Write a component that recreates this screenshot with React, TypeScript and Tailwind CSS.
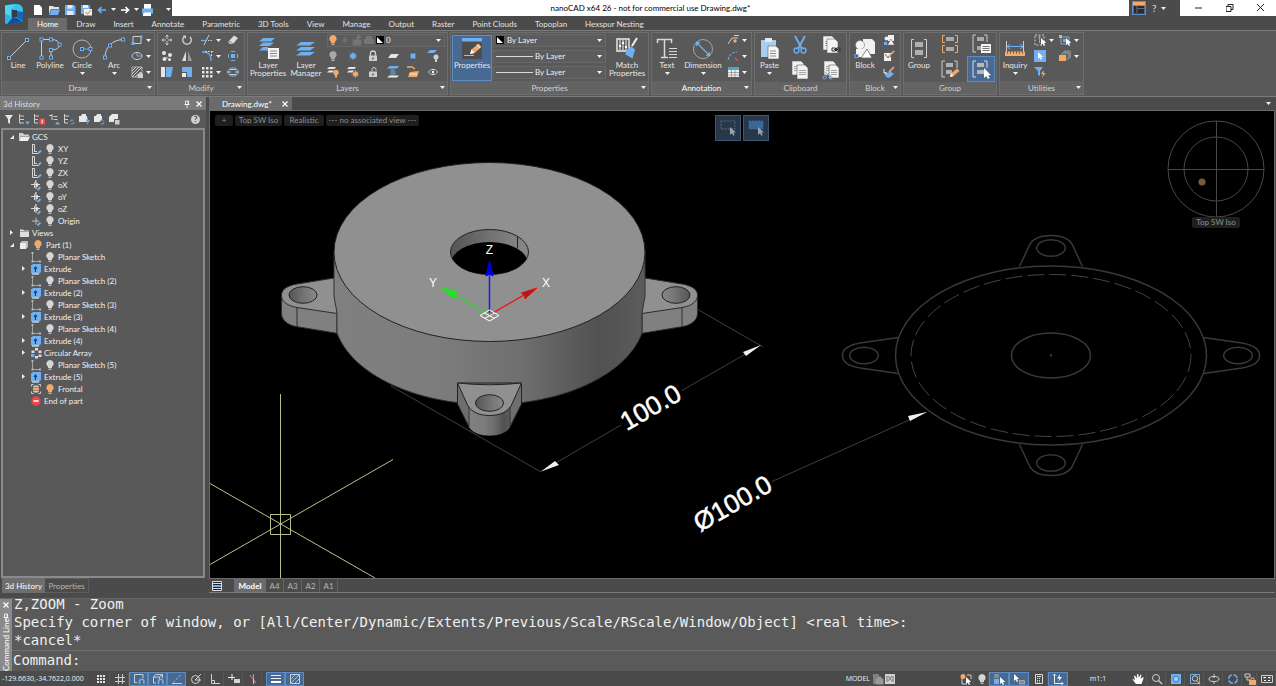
import { useState, type ReactNode } from "react";
import clsx from "clsx";

const L = "#cfcfcf";
const B = "#6fb0f2";
const O = "#f2a96a";

function Nodes({ at }: { at: number[][] }) {
  return (
    <>
      {at.map(([x, y]) => (
        <rect key={`${x}-${y}`} x={x - 1.5} y={y - 1.5} width="3" height="3" fill="#3f4a55" stroke={B} />
      ))}
    </>
  );
}

function Page({ x, y, w = 9, h = 11 }: { x: number; y: number; w?: number; h?: number }) {
  return (
    <>
      <path d={`M${x} ${y}h${w - 3}l3 3v${h - 3}h-${w}z`} fill="#f2f2f2" stroke="#5c5c5c" strokeWidth=".6" />
      <path d={`M${x + 2} ${y + 5.5}h${w - 4}m-${w - 4} 2h${w - 4}m-${w - 4} 2h${w - 4}`} stroke="#a5a5a5" />
    </>
  );
}

const bulb = (fill: string) => (
  <>
    <path d="M6 1a3.700 3.700 0 0 1 2 6.800V9H4V7.800A3.700 3.700 0 0 1 6 1z" fill={fill} />
    <path d="M4.500 9.500h3v1.500h-3z" fill="#b8b8b8" />
  </>
);

const cursor = (x: number, y: number) => (
  <path d={`M${x} ${y}v7l1.700-1.600 1.200 2.500 1.200-.6-1.200-2.300h2.300z`} fill="#fff" />
);

// 24x24 drawings
const big: Record<string, ReactNode> = {
  line: (
    <>
      <path d="M3 21 21 3" stroke={L} />
      <Nodes at={[[3, 21], [21, 3]]} />
    </>
  ),
  polyline: (
    <>
      <path d="M3.500 21V2.500H13c5 0 8.500 2 8.500 5.500S17 13 13 13v8" stroke={L} />
      <Nodes at={[[3.5, 2.5], [13, 2.5], [21.5, 7.5], [13, 13], [3.5, 20.5], [13, 20.5]]} />
    </>
  ),
  circle: (
    <>
      <circle cx="12" cy="12" r="9" stroke="#b5b5b5" />
      <path d="M12 12h8" stroke={B} />
      <Nodes at={[[12, 12], [20.5, 12]]} />
    </>
  ),
  arc: (
    <>
      <path d="M3 21C3 10 10 3 21 2.500" stroke={L} />
      <Nodes at={[[3, 20.5], [8, 8.5], [21, 2.5]]} />
    </>
  ),
  layerProps: (
    <>
      <path d="M7 1h12l-4 3.500H3zM7 5.500h11l-4 3.500H3zM7 10h5v3.500H3z" fill={B} />
      <path d="M12 11h11v11H12z" fill="#f2f2f2" />
      <path d="M14 14h7M14 16.500h7M14 19h7" stroke="#8a8a8a" />
    </>
  ),
  layerManager: (
    <path d="M7 5h14l-5 3.500H2zM7 10h14l-5 3.500H2zM7 15h14l-5 3.500H2z" fill={B} />
  ),
  properties: (
    <>
      <path d="M2 2h20v20H2z" fill="#4d4d4d" />
      <path d="M2 1h20v3.500H2z" fill={B} />
      <path d="M4 18.500h10" stroke={O} />
      <path d="m10 17 1.500-4.500 7-6 3 3.500-7 6z" fill={O} />
      <path d="m10 17 1.500-4.500 3 3.500z" fill="#fff" />
      <path d="m17 7.500 3 3.500" stroke="#fff" />
    </>
  ),
  match: (
    <>
      <path d="M2 2h12v12H2z" stroke="#eee" strokeWidth="1.400" />
      <path d="M5 3v10M8 3v10M11 3v10" stroke="#eee" />
      <path d="M4 9h2M7 6h2M10 10h2" stroke="#fff" strokeWidth="2" />
      <path d="m22 1-5 8" stroke="#eee" strokeWidth="2" />
      <path d="m11 14 5-5 4 3.500-2.500 9-7-4z" fill={B} />
    </>
  ),
  text: (
    <>
      <path d="M2.500 6V2.500h14V6M9.500 2.500V20M6 20.500h7" stroke="#d8d8d8" strokeWidth="1.500" />
      <path d="M14 11.500h8M14 14.500h8M14 17.500h8M14 20.500h8" stroke="#d8d8d8" />
    </>
  ),
  dimension: (
    <>
      <circle cx="12" cy="12" r="9.500" stroke="#a5a5a5" />
      <path d="m6.500 6.500 11 11" stroke={B} strokeWidth="1.300" />
      <path d="M5 5h4.500L5 9.500zM19 19h-4.500l4.500-4.500z" fill={B} />
    </>
  ),
  paste: (
    <>
      <path d="M3 3h15v17H3z" fill="#a9cdf0" />
      <path d="M7 1h7v4H7z" fill="#e8e8e8" />
      <path d="M10 9h8l3 3v10H10z" fill="#f4f4f4" stroke="#5c5c5c" strokeWidth=".6" />
      <path d="M12 14h6M12 16.500h6M12 19h6" stroke="#8a8a8a" />
    </>
  ),
  block: (
    <>
      <path d="M10 2h9l3 3v12H10z" fill="#f0f0f0" />
      <circle cx="7" cy="8" r="4.500" fill="#f4f4f4" stroke="#777" strokeWidth=".6" />
      <path d="M3 12h9v8H3z" fill="#f4f4f4" />
      <path d="m14 12 5 9H8z" fill="#fff" stroke="#666" strokeWidth=".8" />
      <Nodes at={[[3.500, 19]]} />
    </>
  ),
  group: (
    <>
      <path d="M7 2.500H4.500v18H7M17 2.500h2.500v18H17" stroke={L} />
      <path d="M8 5h8v5H8zM8 13h8v5H8z" fill="#b0b0b0" />
    </>
  ),
  inquiry: (
    <>
      <path d="M3.500 4v11M20.500 4v11" stroke={L} />
      <path d="M4 9.500h16M7 7 4 9.500 7 12M17 7l3 2.500-3 2.500" stroke={B} />
      <path d="M2 14.500h20v4.500H2z" fill={O} />
      <path d="M4.500 14.500v2M7.500 14.500v2M10.500 14.500v2M13.500 14.500v2M16.500 14.500v2M19.500 14.500v2" stroke="#7d5028" />
    </>
  ),
};

// 20x20 drawings
const mid: Record<string, ReactNode> = {
  cut: (
    <>
      <path d="m5 1 7 13M15 1 8 14" stroke={B} strokeWidth="1.800" />
      <circle cx="6.500" cy="15.500" r="2.500" stroke={B} strokeWidth="1.300" />
      <circle cx="13.500" cy="15.500" r="2.500" stroke={B} strokeWidth="1.300" />
    </>
  ),
  copyLink: (
    <>
      <Page x={2} y={1} w={12} h={14} />
      <path d="M6 4h8l3 3v11H6z" fill="#f4f4f4" stroke="#666" strokeWidth=".6" />
      <path d="M11 13h3.500v3H11zM15.500 13H19v3h-3.500zM13 14.500h4" stroke="#333" />
    </>
  ),
  copy: (
    <>
      <Page x={2} y={1} w={12} h={14} />
      <Page x={7} y={5} w={11} h={14} />
    </>
  ),
  copyCut: (
    <>
      <Page x={3} y={1} w={12} h={14} />
      <Page x={8} y={5} w={10} h={13} />
      <path d="m4 12 6 5M9 12l-5 5" stroke={B} />
      <circle cx="3.500" cy="17.500" r="1.500" stroke={B} />
      <circle cx="9.500" cy="17.500" r="1.500" stroke={B} />
    </>
  ),
  ungroup: (
    <>
      <path d="M5 1.500H2.500v7H5M15 1.500h2.500v7H15M5 11.500H2.500v7H5M15 11.500h2.500v7H15" stroke={O} />
      <path d="M6 3h8v4H6zM6 13h8v4H6z" fill="#a8a8a8" />
    </>
  ),
  groupEdit: (
    <>
      <path d="M5 2H2v16h3M14 2h3v7" stroke={L} />
      <path d="M6 4h7v4H6zM6 11h6v4H6z" fill="#b0b0b0" />
      <path d="m10 18 1-3.500 6-5 2.500 2.500-6 5z" fill={O} />
      <path d="m10 18 1-3.500 2.500 2.500z" fill="#fff" />
    </>
  ),
  groupList: (
    <>
      <path d="M5 1H2v17h3M13 1h3v7" stroke={L} />
      <path d="M6 3h7v4H6zM6 12h4v4H6z" fill="#a8a8a8" />
      <path d="M10 10h10v9H10z" fill="#f4f4f4" />
      <path d="M11.500 12.500h7M11.500 14.500h7M11.500 16.500h7" stroke="#777" />
    </>
  ),
  groupSelect: (
    <>
      <path d="M5 2H2v16h3M13 2h3v7" stroke="#dcdcdc" />
      <path d="M6 4h7v4H6zM6 11h7v4H6z" fill="#b8b8b8" />
      <path d="M13 9v10l2.300-2 1.700 3 1.700-1-1.700-2.800H20z" fill="#fff" />
    </>
  ),
};

// 12x12 drawings
const small: Record<string, ReactNode> = {
  rect: (
    <>
      <path d="M2 2.500h8v7H2z" stroke={L} />
      <path d="M.500 8h3v3h-3zM9 1.500h2.500V4H9z" fill={B} />
    </>
  ),
  ellipse: (
    <>
      <ellipse cx="6" cy="6" rx="5" ry="3.500" stroke={L} />
      <path d="M6 3v3h5" stroke={B} />
    </>
  ),
  hatch: (
    <>
      <path d="M1 1h10v10H1z" stroke={L} strokeWidth=".7" />
      <path d="m1 5 4-4M1 8l7-7M1 11 11 1M4 11l3-3" stroke={L} />
      <path d="M7 8h5v4H7zM8.500 8V6.500h2V8" fill={L} stroke={L} strokeWidth=".7" />
    </>
  ),
  move: <path d="M6 1v4M6 7v4M1 6h4M7 6h4M4.500 2.500 6 1l1.500 1.500M4.500 9.500 6 11l1.500-1.500M2.500 4.500 1 6l1.500 1.500M9.500 4.500 11 6 9.500 7.500" stroke={L} />,
  rotate: (
    <>
      <path d="M3 3a4.200 4.200 0 1 0 6 0" stroke={L} strokeWidth="1.500" />
      <path d="M1.500 1.500H5V5z" fill={L} />
    </>
  ),
  trim: (
    <>
      <path d="m3 11 5-10" stroke={L} />
      <path d="M0 6.500h5" stroke={B} strokeWidth="1.300" />
      <path d="M7 6.500h1.500M9.500 6.500H11" stroke={L} />
    </>
  ),
  erase: (
    <>
      <path d="m1 8 6-6.500L11 4 6 10H3z" fill="#dcdcdc" />
      <path d="m2 7 4 3" stroke="#777" />
    </>
  ),
  copyObj: (
    <>
      <circle cx="3" cy="3" r="2" fill="#e5e5e5" />
      <circle cx="9" cy="5" r="2" fill="#e5e5e5" />
      <circle cx="3.500" cy="9" r="2" fill="#e5e5e5" />
      <circle cx="8.500" cy="9.500" r="1.500" fill="#e5e5e5" />
      <path d="m5 7 2 1.500" stroke={B} strokeWidth="1.500" />
    </>
  ),
  mirror: (
    <>
      <path d="M5 1v10H1z" fill="#dcdcdc" />
      <path d="M7 1v10h4z" fill="#9a9a9a" />
    </>
  ),
  fillet: (
    <>
      <path d="M1 2h2c4 0 7 3 7 8v1" stroke={B} strokeWidth="1.300" />
      <path d="M4 1.500h8M10.500 1v5" stroke={L} strokeDasharray="2 1" />
    </>
  ),
  explode: (
    <>
      <path d="M4 4h4v4H4z" fill={B} />
      <path d="M4 1.500h4M4 10.500h4M1.500 4v4M10.500 4v4" stroke={B} />
    </>
  ),
  stretch: (
    <>
      <path d="M0 1h4v10H0z" fill="#e5e5e5" />
      <path d="M5 1h7l-2 10H5z" fill={B} />
    </>
  ),
  scale: (
    <>
      <path d="M1 1h10v10H6V6H1z" fill={B} />
      <path d="M1 7h4v4H1z" fill="#eee" />
    </>
  ),
  array: <path d="M1 1h2.500v2.500H1zM5 1h2.500v2.500H5zM9 1h2.500v2.500H9zM1 5h2.500v2.500H1zM5 5h2.500v2.500H5zM9 5h2.500v2.500H9zM1 9h2.500v2.500H1zM5 9h2.500v2.500H5zM9 9h2.500v2.500H9z" fill="#e5e5e5" />,
  offset: (
    <>
      <path d="M1 4.500 3.500 2h5L11 4.500v3L8.500 10h-5L1 7.500z" stroke={B} />
      <path d="M2.500 3.500h7M2.500 8.500h7" stroke={L} />
      <path d="M0 6h4M8 6h4" stroke={L} />
    </>
  ),
  bulbOn: bulb(O),
  bulb: bulb("#d5d5d5"),
  bulbGrey: bulb("#a9a9a9"),
  sunDim: <circle cx="6" cy="6" r="2.500" fill="#6c6c6c" />,
  sunBlue: (
    <>
      <circle cx="6" cy="6" r="2.700" fill={B} />
      <path d="M6 2v8M2 6h8M3 3l6 6M9 3 3 9" stroke={B} strokeWidth=".7" />
    </>
  ),
  lockDim: <path d="M2 6h8v5H2zM6 6V3.500a2 2 0 0 1 4 0" fill="#757575" stroke="#757575" />,
  lock: (
    <>
      <path d="M2 5.500h8V11H2z" fill={L} />
      <path d="M3.500 6V3.500a2.500 2.500 0 0 1 5 0V6" stroke={L} strokeWidth="1.300" />
      <path d="M5 7.500h2v2H5z" fill="#777" />
    </>
  ),
  unlock: (
    <>
      <path d="M2 5.500h8V11H2z" fill={L} />
      <path d="M5 5.500V3.500a2 2 0 0 1 4 0v1" stroke={L} />
      <path d="M5 7.500h2v2H5z" fill="#777" />
    </>
  ),
  printDim: <path d="M1 5h10v5H1zM3 2h6v3H3z" fill="#757575" />,
  sheet: <path d="M4 4h8L9 8H1z" fill="#e5e5e5" />,
  dot: <path d="M3.500 3.500h5v5h-5z" fill={B} stroke="#4d7fb8" strokeWidth=".7" />,
  layerBulb: (
    <>
      <path d="M3 0h7L7 3H0z" fill={B} />
      <circle cx="9" cy="7" r="2.500" fill={L} />
      <path d="M8 9h2v3H8z" fill={L} />
    </>
  ),
  layerOn: (
    <>
      <path d="M2 1h7L7.500 3H0zM2 4.500h5L5.500 6.500H0z" fill="#e5e5e5" />
      <circle cx="9" cy="6.500" r="2.700" fill={O} />
      <path d="M8 9h2v2.500H8z" fill={O} />
    </>
  ),
  layerSun: (
    <>
      <path d="M2 1h7L7.500 3H0zM2 4.500h5L5.500 6.500H0z" fill="#e5e5e5" />
      <circle cx="8.500" cy="8" r="2.500" fill={O} />
      <path d="M8.500 4v8M4.500 8h8M6 5.500l5 5M11 5.500l-5 5" stroke={O} strokeWidth=".7" />
    </>
  ),
  layerWalk: (
    <>
      <path d="M2.500 0H12l-2 2.500H0z" fill={B} />
      <path d="M3.500 4h4M3.500 6h5M3.500 8h5" stroke={B} />
      <path d="M2.500 9.500H12l-2 2H0z" fill="#eee" />
    </>
  ),
  layerMerge: (
    <>
      <path d="M0 1h5l3 2" stroke={O} strokeWidth="1.500" />
      <path d="m3 6 9-1-2 6H1z" fill={O} />
      <path d="M2 8h8" stroke="#fff" strokeWidth=".7" />
    </>
  ),
  eye: (
    <>
      <path d="M1.500 6c3-3.500 6-3.500 9 0-3 3.500-6 3.500-9 0z" fill="#333" stroke="#e5e5e5" />
      <circle cx="6" cy="6" r="1.500" fill="#fff" />
    </>
  ),
  leader: (
    <>
      <path d="m1 10 4-6h6" stroke={L} />
      <path d="M7 1.500h5" stroke={L} />
      <circle cx="8" cy="7" r="1.700" fill={O} />
    </>
  ),
  leaderAdd: (
    <>
      <path d="M1 10c1-5 4-8 9-8" stroke={B} strokeDasharray="3 1" />
      <path d="m8 8 3 3" stroke="#e05050" strokeWidth="1.500" />
    </>
  ),
  table: (
    <>
      <path d="M1 1h11v10H1z" fill="#f0f0f0" />
      <path d="M1 1h11v3H1z" fill="#49a9c9" />
      <path d="M1 6.500h11M1 9h11M4.500 4v7M8 4v7" stroke="#888" strokeWidth=".7" />
    </>
  ),
  blockSmall: (
    <>
      <path d="M5 1h6v6H5z" fill="#f2f2f2" />
      <circle cx="3.500" cy="4.500" r="2" fill="#f2f2f2" />
      <path d="m8 5 3.500 6h-7z" fill="#fff" stroke="#666" strokeWidth=".6" />
      <path d="M1 8h3v3H1z" fill={B} />
    </>
  ),
  blockEdit: (
    <>
      <path d="M1 3h7v8H1z" fill="#f2f2f2" />
      <path d="m2 4 3 4 2-3 3 6" stroke="#666" />
      <path d="m6 6 5-5" stroke={O} strokeWidth="1.700" />
    </>
  ),
  blockBrush: (
    <>
      <path d="m1 6 4 1 2-2 4 3-5 4-3-1z" fill={B} />
      <path d="m6 6 5-5" stroke={O} strokeWidth="1.700" />
      <path d="M1 3v4h3" stroke="#eee" />
    </>
  ),
  selWin: (
    <>
      <path d="M1 1h9v10H1z" stroke={L} strokeDasharray="2 1.500" />
      <path d="M5.500 9V2M4 3.500 5.500 2 7 3.500" stroke={B} />
      {cursor(7, 4)}
    </>
  ),
  selObj: (
    <>
      <path d="M0 0h12v12H0z" fill={B} />
      {cursor(4, 2)}
    </>
  ),
  filterQ: (
    <>
      <path d="M0 1h9L6 5v5L4 9V5z" fill={B} />
      <path d="M9.500 4 7 8h2l-1 4 3.500-5h-2z" fill={O} />
    </>
  ),
  selGroup: (
    <>
      <path d="M2 3h8v7H2z" stroke={B} />
      <path d="M0 1h3v3H0z" fill={O} />
      <path d="M4 5h3v3H4z" fill={B} />
      {cursor(7, 4)}
    </>
  ),
  orderObj: (
    <>
      <path d="M5 1h7v6H5z" fill="#777" stroke="#999" strokeWidth=".7" />
      <path d="M3 3h7v6H3z" fill="#666" stroke="#aaa" strokeWidth=".7" />
      <path d="M0 5h7v6H0z" fill={O} />
    </>
  ),
  newDoc: <path d="M2 1h5.500L10 3.500V11H2z" fill="#fff" />,
  open: (
    <>
      <path d="M1 2h4l1 1h5v2H3l-2 5z" fill="#e5e5e5" />
      <path d="M3.500 5.500H12L10 11H1z" fill={B} />
    </>
  ),
  save: (
    <>
      <path d="M1 1h9l1.500 1.500V11H1z" fill={B} />
      <path d="M3.500 1h5v3.500h-5zM3 7h6.500v4H3z" fill="#e8e8e8" />
    </>
  ),
  saveAs: (
    <>
      <path d="M1 1h8l1 1v8H1z" fill={B} />
      <path d="M3 1h5v3H3z" fill="#eee" />
      <path d="M4 5h8v6.500H4z" fill="#f2f2f2" />
      <path d="m5.500 8 2 2L11 6" stroke={O} strokeWidth="1.500" />
    </>
  ),
  undo: <path d="M10 6H3M5.500 3 2.500 6l3 3" stroke={B} strokeWidth="1.700" />,
  redo: <path d="M2 6h7M6.500 3l3 3-3 3" stroke="#fff" strokeWidth="1.700" />,
  print: (
    <>
      <path d="M3 0h7v5H3zM2 8.500h8V12H2z" fill="#fff" />
      <path d="M1 4.500h11v5H1z" fill={B} />
      <path d="M3 8.500h7v2.500H3z" fill="#fff" />
    </>
  ),
  pin: <path d="M4.500 3h3v3.500h-3zM3.500 6.500h5M6 7v3M7 3v3" stroke="#fff" strokeWidth=".8" />,
  x: <path d="m3.500 3.500 5 5M8.500 3.500l-5 5" stroke="#fff" strokeWidth="1.200" />,
  funnel: <path d="M2 2h8L7 6v5L5 9.500V6z" fill="#e5e5e5" />,
  treeDown: (
    <>
      <path d="M1.500 1v9H6M1.500 3H6M1.500 6.500H6" stroke={L} />
      <path d="M7 8.500h5l-2.500 3z" fill={B} />
    </>
  ),
  treeRed: (
    <>
      <path d="M1.500 1v9H5M1.500 3H6M1.500 6.500H5" stroke={L} />
      <path d="M6.500 5.500H12v6H6.500z" fill="#ef4b4b" />
      <path d="M9.200 6.500v4" stroke="#fff" />
    </>
  ),
  treeUp: (
    <>
      <path d="M1 2.500h3M4 1v6M5.500 3.500h4M5.500 6.500h4" stroke={L} />
      <path d="M7 11.500h5l-2.500-3z" fill={B} />
    </>
  ),
  treeSync: (
    <>
      <path d="M1.500 1v9H5M1.500 3H6M1.500 6.500H5" stroke={L} />
      <circle cx="9" cy="9" r="2" stroke={B} strokeDasharray="4 2" />
    </>
  ),
  solidFlash: (
    <>
      <path d="M1 3h2l1-2h4v2h1v6H1z" fill="#e8e8e8" />
      <path d="M10 4 7.500 8h2L9 12l3-5h-2z" fill={B} />
    </>
  ),
  solidSync: (
    <>
      <path d="M1 3h2l1-2h4v2h1v6H1z" fill="#e8e8e8" />
      <circle cx="9" cy="9" r="2" fill="#595959" stroke={B} strokeDasharray="4 2" />
    </>
  ),
  solidCopy: (
    <>
      <path d="M1 4 4 1h6v8H1z" fill="#e8e8e8" />
      <path d="M6.500 6.500H12V12H6.500z" fill="#cfcfcf" stroke="#595959" />
    </>
  ),
  folderOpen: (
    <>
      <path d="M1 2h4l1 1.500h5V5H3l-2 5z" fill="#cfcfcf" />
      <path d="M3 5.500h9L10 10H1z" fill="#eee" />
    </>
  ),
  folder: (
    <>
      <path d="M2 2.500h3l1 1h5V10H2z" fill="#e0e0e0" />
      <path d="M2 4.500h9" stroke="#8a8a8a" strokeWidth=".7" />
    </>
  ),
  cube: (
    <>
      <path d="M2 4 4 2h6v6l-2 2H2z" fill="#bdbdbd" />
      <path d="M2 4h6v6H2z" fill="#ececec" />
    </>
  ),
  plane: (
    <>
      <path d="M2.500 1v9.500H8M2.500 1.500h2V8" stroke="#d5d5d5" />
      <path d="M4 8.500h3" stroke="#d5d5d5" />
      <path d="m8 10.500 3-3" stroke={B} strokeWidth="1.800" />
    </>
  ),
  axis: (
    <>
      <path d="M1 5.500h9M6 1v9M6 1.500 4.500 4v5" stroke="#d5d5d5" />
      <path d="M7 4v4" stroke="#eee" strokeWidth="1.500" />
      <path d="m7.500 11 3-3" stroke={B} strokeWidth="1.800" />
    </>
  ),
  origin: (
    <>
      <path d="M2 6h7M6 2.500v7" stroke="#bdbdbd" />
      <path d="m7.500 10.500 3-3" stroke={B} strokeWidth="1.800" />
    </>
  ),
  sketch: (
    <>
      <path d="M2.500 2v8.500H10" stroke="#a5a5a5" />
      <path d="M1.500 1h2v2h-2zM9 9.500h2v2H9zM1.500 9.500h2v2h-2z" fill="#b5b5b5" />
    </>
  ),
  extrude: (
    <>
      <path d="M1 2.500 3 1h8v8l-1.500 1.500H1z" fill={B} />
      <path d="M2 10.500h7v1H2z" fill="#fff" />
      <path d="M5.500 9V4.500M4 6l1.500-2L7 6" stroke="#1d3f66" strokeWidth="1.200" />
    </>
  ),
  circArray: (
    <>
      <path d="M5 1h3v2.500H5zM8.500 3.500h3V6h-3zM8.500 7.500h3V10h-3zM5 9h3v2.500H5zM1.500 3.500h3V6h-3z" fill="#dedede" />
      <path d="M1 7h3.500v3H1z" fill={B} />
    </>
  ),
  frontal: (
    <>
      <path d="M1.500 3.500v-2h2M8.500 1.500h2v2M10.500 8.500v2h-2M3.500 10.500h-2v-2" stroke={L} />
      <path d="M4 2.500h4L9 4H3zM3 8h6l-1 1.500H4z" fill="#d0d0d0" />
      <path d="M3 4.500h6v3H3z" fill={O} />
    </>
  ),
  end: (
    <>
      <circle cx="6" cy="6" r="4.700" fill="#ee4444" />
      <path d="M3.500 6h5" stroke="#fff" strokeWidth="1.600" />
    </>
  ),
  gridDots: <path d="M2 2h2v2H2zM5 2h2v2H5zM8 2h2v2H8zM2 5h2v2H2zM5 5h2v2H5zM8 5h2v2H8zM2 8h2v2H2zM5 8h2v2H5zM8 8h2v2H8z" fill="#e5e5e5" />,
  grid: <path d="M4.500 1v10M8.500 1v10M1 4.500h10M1 8.500h10" stroke={L} />,
  snap: (
    <>
      <path d="M10 5V1.500H1.500v8H4" stroke={L} />
      <path d="M6.500 11V8.500a2.200 2.200 0 0 1 4.400 0V11" stroke={B} strokeWidth="1.600" />
    </>
  ),
  snap3d: (
    <>
      <path d="M1.500 4v6H4M1.500 4h6v2M1.500 4l2-2.500h7V5M7.500 4l3-2.500" stroke={L} />
      <path d="M6.500 11V8.500a2.200 2.200 0 0 1 4.400 0V11" stroke={B} strokeWidth="1.600" />
    </>
  ),
  otrack: (
    <>
      <path d="M1 10.500h10" stroke={L} />
      <path d="m2 10 8-8.500" stroke={B} strokeDasharray="3 1" />
    </>
  ),
  polar: (
    <>
      <circle cx="5.500" cy="6.500" r="4" stroke={L} />
      <path d="m5 7 6-6M5 7h6" stroke={L} />
    </>
  ),
  ortho: <path d="M2.500 1v9.500H11M2.500 7.500h3v3" stroke={L} />,
  dyn: (
    <>
      <path d="M0 4.500h7M4 1v6" stroke="#eee" />
      <path d="M6 6h6v4H6z" fill="#d5d5d5" />
    </>
  ),
  cross: (
    <>
      <path d="m3 2 6 8" stroke="#d88" />
      <path d="M6.500 1v6" stroke={B} />
      <path d="M6.500 6v5" stroke={L} />
    </>
  ),
  lweight: (
    <>
      <path d="M1 2.500h10" stroke="#eee" />
      <path d="M1 5.500h10" stroke="#eee" />
      <path d="M1 9h10" stroke="#fff" strokeWidth="2" />
    </>
  ),
  hatchS: (
    <>
      <path d="M1.500 1.500h9v9h-9z" stroke={L} />
      <path d="m2 6 4-4M2 10l8-8M6 10l4-4" stroke={L} strokeWidth=".8" />
    </>
  ),
  modelLock: (
    <>
      <path d="M1 1h6v10H1z" fill="#808080" />
      <path d="M4 6h7v5H4zM6 6V4h3v2" fill="#999" stroke="#999" />
    </>
  ),
  modelX: (
    <>
      <path d="M1 1h10v10H1z" fill="#d0d0d0" />
      <path d="m4 3 4 5M8 3 4 8M3 3v6M9 3v6" stroke="#777" />
    </>
  ),
  selBulb: (
    <>
      <path d="M2 5v6h5M7 2h4v4" stroke={L} />
      <circle cx="3" cy="3.500" r="2.500" fill={O} />
      {cursor(6, 4)}
    </>
  ),
  selA: (
    <>
      <path d="M1 1h5v4H1z" fill="#8a8a8a" />
      <path d="M1 6h5v5H1z" fill={B} />
      {cursor(7, 4)}
    </>
  ),
  selB: (
    <>
      {cursor(1, 1)}
      <path d="M6.500 7.500h5V11h-5z" fill="#888" stroke="#bbb" strokeWidth=".7" />
    </>
  ),
  calc: (
    <>
      <path d="M2.500 1.500h7v9h-7z" stroke="#ddd" />
      <path d="M4 3.500h4" stroke="#ddd" />
      <path d="M4 5.500h4M4 7.500h4M4 9h4" stroke="#ddd" strokeDasharray="1 1" />
    </>
  ),
  ucs: (
    <>
      <path d="M2.500 1v9.500H11M1 2.500 2.500 1 4 2.500M9.500 9 11 10.500 9.500 12" stroke="#eee" />
      <path d="M8 1 5 5.500h2.500L6 9l4-5H7.500z" fill="#fff" />
    </>
  ),
  hand: <path d="M4 11 .500 6.500l1-.5L3 7.500 2 3l1-.5L4.800 5.500 5 1h1.300l.4 4L8.500 1.500l1 .5L8.500 6l2.500-2 .7.8L9.500 11z" fill="#fff" />,
  zoom: (
    <>
      <circle cx="5" cy="5" r="3.500" stroke={L} />
      <path d="m7.500 7.500 3.500 3.500" stroke={L} strokeWidth="1.300" />
    </>
  ),
  zoomAll: (
    <>
      <path d="M1 1h10v10H1z" fill={B} />
      <circle cx="6" cy="6" r="2.800" fill="#a6cdf5" stroke="#4679b0" />
    </>
  ),
  zoomWin: (
    <>
      <path d="M1.500 1.500h9v9h-9z" stroke={B} />
      <circle cx="6" cy="5.500" r="2.700" stroke={L} />
      <path d="m8 8 3 3.500" stroke={L} />
    </>
  ),
  orbit: (
    <>
      <ellipse cx="6" cy="6" rx="5" ry="2.500" stroke={L} />
      <path d="M6 1v4M6 8v3" stroke={L} />
    </>
  ),
  sync: <circle cx="6" cy="6" r="4.300" stroke={B} strokeWidth="1.400" strokeDasharray="5 1.750" />,
  lockUi: (
    <>
      <path d="M1 1h5v3H1zM3 4v3h3" stroke={L} />
      <path d="M5 7h7v5H5z" fill={O} />
      <path d="M7 7V5h3v2" stroke={O} />
    </>
  ),
  full: (
    <>
      <path d="M.500 2.500h11v7H.5z" stroke={L} />
      <path d="M3 4.500h2M3 4v1.500M9 4.500H7M9 4v1.500M3 7.500h2M9 7.500H7" stroke="#fff" />
    </>
  ),
  sheets: (
    <>
      <path d="M1.500 1.500h9v9h-9z" fill="#222" stroke="#ddd" />
      <path d="M1 3.500h10M1 8.500h10" stroke="#ddd" />
      <path d="M2 6h8" stroke={B} strokeWidth="2" />
    </>
  ),
  workspace: (
    <>
      <path d="M1 4h10v7.500H1z" fill="#2b2b2b" />
      <path d="M0 0h12v3.500H0z" fill={O} />
      <path d="M4 4v7M4 6.500h7" stroke="#6a6a6a" />
    </>
  ),
};

const sizes = {
  12: { set: small, cls: "w-3 h-3" },
  20: { set: mid, cls: "w-5 h-5" },
  24: { set: big, cls: "w-6 h-6" },
};

function Icon({ name, size = 12 }: { name: string; size?: 12 | 20 | 24 }) {
  const { set, cls } = sizes[size];
  return (
    <svg viewBox={`0 0 ${size} ${size}`} fill="none" className={clsx(cls, "shrink-0")} aria-hidden="true">
      {set[name]}
    </svg>
  );
}

function Caret() {
  return (
    <svg viewBox="0 0 5 3" className="w-[5px] h-[3px] shrink-0" aria-hidden="true">
      <path d="M0 0h5L2.500 3z" fill="#f2f2f2" />
    </svg>
  );
}

function BigButton({ icon, label, caret, active, className }: {
  icon: string;
  label: string[];
  caret?: boolean;
  active?: boolean;
  className: string;
}) {
  return (
    <button
      className={clsx(
        "flex shrink-0 flex-col items-center leading-[8px]",
        active ? "mt-[3px] h-[46px] border border-[#5c8cc4] bg-[#486a92] pt-px" : "h-12 pt-[5px]",
        className
      )}
    >
      <Icon name={icon} size={24} />
      {label.map((line) => (
        <span key={line}>{line}</span>
      ))}
      {caret && <span className="flex h-2 items-center"><Caret /></span>}
    </button>
  );
}

function SmallButton({ icon, label, caret, size = 12, className }: {
  icon: string;
  label: string;
  caret?: boolean;
  size?: 12 | 20;
  className?: string;
}) {
  return (
    <button aria-label={label} className={clsx("flex items-center gap-[3px]", size === 12 && "h-4", className)}>
      <Icon name={icon} size={size} />
      {caret && <Caret />}
    </button>
  );
}

function RibbonGroup({ title, className, launcher, bright, children }: {
  title: string;
  className: string;
  launcher?: boolean;
  bright?: boolean;
  children: ReactNode;
}) {
  return (
    <section className={clsx("flex shrink-0 flex-col border border-[#6e6e6e] bg-[#595959]", className)}>
      <div className="flex h-[50px] -mt-px">{children}</div>
      <div className={clsx("relative flex h-[13px] items-center justify-center bg-[#636363]", bright ? "text-white" : "text-[#d2d2d2]")}>
        {title}
        {launcher && <span className="absolute right-[2px] top-[5px]"><Caret /></span>}
      </div>
    </section>
  );
}

const selectCls = "h-[13px] w-full appearance-none rounded-none border border-[#686868] bg-[#5c5c5c] text-[#f0f0f0] outline-none";

function Swatch({ className }: { className?: string }) {
  return (
    <svg viewBox="0 0 8 8" className={clsx("h-2 w-2", className)} aria-hidden="true">
      <path d="M0 0h8v8H0z" fill="#000" />
      <path d="M1 1v6h6z" fill="#fff" />
    </svg>
  );
}

function Combo({ label, value, pad, children }: { label: string; value: string; pad: string; children: ReactNode }) {
  return (
    <div className="relative flex h-4 items-center">
      <select aria-label={label} className={clsx(selectCls, pad)}>
        <option>{value}</option>
      </select>
      <span className="pointer-events-none absolute left-[3px] flex items-center">{children}</span>
      <span className="pointer-events-none absolute right-1"><Caret /></span>
    </div>
  );
}

const menu = ["Home", "Draw", "Insert", "Annotate", "Parametric", "3D Tools", "View", "Manage", "Output", "Raster", "Point Clouds", "Topoplan", "Hexspur Nesting"];

function TitleBar() {
  const [tab, setTab] = useState("Home");
  return (
    <header className="flex bg-[#4b4b4b]">
      <svg viewBox="0 0 18 20" className="ml-[5px] mt-1 h-5 w-[18px] shrink-0" aria-label="nanoCAD" role="img">
        <path d="M0 2Q0 1 1 1L11 0Q18 0 18 8V16Q18 18 16 18L8 20H2Q0 20 0 18z" fill="#1e9fe0" />
        <path d="M0 1.500 11 0 7 5H6v8l-6-3z" fill="#4fd3ee" />
        <path d="M11 0c5 0 7 3 7 8l-6-1-5-2z" fill="#37c5ec" />
        <path d="M18 8v9l-6-4V7z" fill="#1565b8" />
        <path d="m17 17.500-9 2.500H2l5-6h5z" fill="#0f4fa0" />
        <path d="M0 10v9l2 1 5-6-1-2z" fill="#2bb4e8" />
        <path d="M7 6h5v7l-5 1z" fill="#333c46" />
      </svg>
      <div className="min-w-0 flex-1">
        <div className="flex h-4 items-stretch">
          <div className="flex w-[149px] shrink-0 items-center pl-[9px] pt-[3px]">
            {["newDoc", "open", "save", "saveAs"].map((n) => (
              <button key={n} aria-label={n} className="mr-1 w-3"><Icon name={n} /></button>
            ))}
            <button aria-label="Undo" className="flex items-center gap-[3px]"><Icon name="undo" /><Caret /></button>
            <button aria-label="Redo" className="ml-[3px] flex items-center gap-[3px]"><Icon name="redo" /><Caret /></button>
            <button aria-label="Print" className="ml-[2px]"><Icon name="print" /></button>
            <button aria-label="Customize" className="ml-[13px]"><Caret /></button>
          </div>
          <h1 className="flex flex-1 items-center justify-center bg-white text-black">
            nanoCAD x64 26 - not for commercial use Drawing.dwg*
          </h1>
          <div className="flex w-[51px] items-center gap-1 pl-[3px] text-[#e0e0e0]">
            <button aria-label="Workspace" className="flex h-[14px] w-[14px] items-center justify-center border border-[#5c8cc4] bg-[#486a92]">
              <Icon name="workspace" />
            </button>
            <button aria-label="Help" className="flex items-center gap-[5px] pl-[2px] text-[10px]">?<Caret /></button>
          </div>
          <div className="flex w-24 items-center justify-around bg-white pl-1">
            {["M0 4h7", "M0 2.500h5v5H0zM2 2.500V.500h5v5H5", "m0 0 7 7M7 0 0 7"].map((d, i) => (
              <button key={d} aria-label={["Minimize", "Restore", "Close"][i]} className="px-2">
                <svg viewBox="0 0 8 8" className="h-2 w-2" fill="none" stroke="#222"><path d={d} /></svg>
              </button>
            ))}
          </div>
        </div>
        <nav role="tablist" className="flex h-[14px] items-end pl-[5px]">
          {menu.map((m) => (
            <button
              key={m}
              role="tab"
              aria-selected={tab === m}
              onClick={() => setTab(m)}
              className={clsx("h-3 px-[9px] leading-[12px]", tab === m ? "bg-[#6b6b6b] text-white" : "text-[#e2e2e2]")}
            >
              {m}
            </button>
          ))}
        </nav>
      </div>
    </header>
  );
}

function Ribbon() {
  return (
    <div className="flex h-[67px] gap-[2px] border-y border-[#7b7b7b] bg-[#595959] p-px text-[#e6e6e6]">
      <RibbonGroup title="Draw" className="w-[154px]" launcher>
        <BigButton icon="line" label={["Line"]} className="w-8" />
        <BigButton icon="polyline" label={["Polyline"]} className="w-8" />
        <BigButton icon="circle" label={["Circle"]} caret className="w-8" />
        <BigButton icon="arc" label={["Arc"]} caret className="w-8" />
        <div className="pl-px">
          <SmallButton icon="rect" label="Rectangle" caret />
          <SmallButton icon="ellipse" label="Ellipse" caret />
          <SmallButton icon="hatch" label="Hatch" caret />
        </div>
      </RibbonGroup>
      <RibbonGroup title="Modify" className="w-[88px]" launcher>
        <div className="ml-[3px] grid h-12 grid-cols-[20px_20px_26px_12px]">
          <SmallButton icon="move" label="Move" />
          <SmallButton icon="rotate" label="Rotate" />
          <SmallButton icon="trim" label="Trim" caret />
          <SmallButton icon="erase" label="Erase" />
          <SmallButton icon="copyObj" label="Copy" />
          <SmallButton icon="mirror" label="Mirror" />
          <SmallButton icon="fillet" label="Fillet" caret />
          <SmallButton icon="explode" label="Explode" />
          <SmallButton icon="stretch" label="Stretch" />
          <SmallButton icon="scale" label="Scale" />
          <SmallButton icon="array" label="Array" caret />
          <SmallButton icon="offset" label="Offset" />
        </div>
      </RibbonGroup>
      <RibbonGroup title="Layers" className="w-[201px]" launcher>
        <BigButton icon="layerProps" label={["Layer", "Properties"]} className="w-10" />
        <BigButton icon="layerManager" label={["Layer", "Manager"]} className="w-9" />
        <div className="ml-[3px] w-[118px]">
          <Combo label="Layer" value="0" pad="pl-[58px]">
            <span className="flex items-center -ml-[3px]">
              <Icon name="bulbOn" />
              <Icon name="sunDim" />
              <Icon name="lockDim" />
              <Icon name="printDim" />
            </span>
            <Swatch className="ml-px" />
          </Combo>
          <div className="grid grid-cols-[repeat(6,20px)]">
            {["bulbGrey", "sunBlue", "lock", "sheet", "dot", "layerBulb", "layerOn", "layerSun", "unlock", "layerWalk", "layerMerge", "eye"].map((n) => (
              <SmallButton key={n} icon={n} label={n} />
            ))}
          </div>
        </div>
      </RibbonGroup>
      <RibbonGroup title="Properties" className="w-[199px]" launcher>
        <BigButton icon="properties" label={["Properties"]} active className="ml-px w-10" />
        <div className="ml-px w-[113px]">
          <Combo label="Color" value="By Layer" pad="pl-[13px]"><Swatch /></Combo>
          <Combo label="Linetype" value="By Layer" pad="pl-[41px]"><span className="block h-px w-[37px] bg-[#dcdcdc]" /></Combo>
          <Combo label="Lineweight" value="By Layer" pad="pl-[41px]"><span className="block h-px w-[37px] bg-[#dcdcdc]" /></Combo>
        </div>
        <BigButton icon="match" label={["Match", "Properties"]} className="ml-px w-10" />
      </RibbonGroup>
      <RibbonGroup title="Annotation" className="w-[101px]" launcher bright>
        <BigButton icon="text" label={["Text"]} caret className="w-[30px]" />
        <BigButton icon="dimension" label={["Dimension"]} caret className="w-[42px]" />
        <div className="ml-[3px]">
          <SmallButton icon="leader" label="Leader" caret />
          <SmallButton icon="leaderAdd" label="Add leader" caret />
          <SmallButton icon="table" label="Table" caret />
        </div>
      </RibbonGroup>
      <RibbonGroup title="Clipboard" className="w-[93px]">
        <BigButton icon="paste" label={["Paste"]} caret className="w-[29px]" />
        <div className="grid h-[50px] grid-cols-[31px_31px] justify-items-center">
          <SmallButton icon="cut" label="Cut" size={20} />
          <SmallButton icon="copyLink" label="Copy with link" size={20} />
          <SmallButton icon="copy" label="Copy" size={20} />
          <SmallButton icon="copyCut" label="Copy clip" size={20} />
        </div>
      </RibbonGroup>
      <RibbonGroup title="Block" className="w-[52px]" launcher>
        <BigButton icon="block" label={["Block"]} className="w-[30px]" />
        <div className="ml-[3px]">
          <SmallButton icon="blockSmall" label="Create block" />
          <SmallButton icon="blockEdit" label="Edit block" />
          <SmallButton icon="blockBrush" label="Update block" />
        </div>
      </RibbonGroup>
      <RibbonGroup title="Group" className="w-[94px]">
        <BigButton icon="group" label={["Group"]} className="w-[30px]" />
        <div className="grid h-[50px] grid-cols-[31px_31px] justify-items-center">
          <SmallButton icon="ungroup" label="Ungroup" size={20} />
          <SmallButton icon="groupList" label="Group list" size={20} />
          <SmallButton icon="groupEdit" label="Edit group" size={20} />
          <SmallButton icon="groupSelect" label="Group selection" size={20} className="w-7 justify-center border border-[#5c8cc4] bg-[#486a92]" />
        </div>
      </RibbonGroup>
      <RibbonGroup title="Utilities" className="w-[85px]" launcher>
        <BigButton icon="inquiry" label={["Inquiry"]} caret className="w-[30px]" />
        <div className="ml-1 w-[25px]">
          <SmallButton icon="selWin" label="Select window" caret />
          <SmallButton icon="selObj" label="Select object" />
          <SmallButton icon="filterQ" label="Quick filter" />
        </div>
        <div>
          <SmallButton icon="selGroup" label="Select similar" caret />
          <SmallButton icon="orderObj" label="Draw order" caret />
        </div>
      </RibbonGroup>
    </div>
  );
}

type Row = { text: string; icons: string[]; level: 0 | 1; arrow?: "open" | "closed" };

const sketchRow = (text: string): Row => ({ text, icons: ["sketch", "bulb"], level: 1 });
const extrudeRow = (text: string): Row => ({ text, icons: ["extrude"], level: 1, arrow: "closed" });

const rows: Row[] = [
  { text: "GCS", icons: ["folderOpen"], level: 0, arrow: "open" },
  { text: "XY", icons: ["plane", "bulb"], level: 1 },
  { text: "YZ", icons: ["plane", "bulb"], level: 1 },
  { text: "ZX", icons: ["plane", "bulb"], level: 1 },
  { text: "oX", icons: ["axis", "bulb"], level: 1 },
  { text: "oY", icons: ["axis", "bulb"], level: 1 },
  { text: "oZ", icons: ["axis", "bulb"], level: 1 },
  { text: "Origin", icons: ["origin", "bulb"], level: 1 },
  { text: "Views", icons: ["folder"], level: 0, arrow: "closed" },
  { text: "Part (1)", icons: ["cube", "bulbOn"], level: 0, arrow: "open" },
  sketchRow("Planar Sketch"),
  extrudeRow("Extrude"),
  sketchRow("Planar Sketch (2)"),
  extrudeRow("Extrude (2)"),
  sketchRow("Planar Sketch (3)"),
  extrudeRow("Extrude (3)"),
  sketchRow("Planar Sketch (4)"),
  extrudeRow("Extrude (4)"),
  { text: "Circular Array", icons: ["circArray"], level: 1, arrow: "closed" },
  sketchRow("Planar Sketch (5)"),
  extrudeRow("Extrude (5)"),
  { text: "Frontal", icons: ["frontal", "bulbOn"], level: 1 },
  { text: "End of part", icons: ["end"], level: 1 },
];

function HistoryPanel() {
  const tools = ["funnel", "treeDown", "treeRed", "treeUp", "treeSync", "solidFlash", "solidSync", "solidCopy"];
  return (
    <aside className="flex w-[206px] shrink-0 flex-col">
      <div className="flex h-[13px] items-center bg-[#797979] pl-[3px] pr-px text-[#dedede]">
        <h2 className="flex-1">3d History</h2>
        <button aria-label="Pin" className="w-3"><Icon name="pin" /></button>
        <button aria-label="Close"><Icon name="x" /></button>
      </div>
      <div className="flex h-[18px] items-center gap-[3px] bg-[#595959] pl-[3px] pr-[6px]">
        {tools.map((t) => (
          <button key={t} aria-label={t}><Icon name={t} /></button>
        ))}
        <button aria-label="Help" className="ml-auto flex h-[9px] w-[9px] items-center justify-center rounded-full bg-[#d0d0d0] font-bold text-[#444]">?</button>
      </div>
      <ul role="tree" className="mx-px flex-1 border-2 border-[#8a8a8a] bg-[#595959] pt-px text-[#f0f0f0]">
        {rows.map((row) => (
          <li
            key={row.text}
            role="treeitem"
            aria-expanded={row.arrow ? row.arrow === "open" : undefined}
            className={clsx("flex h-3 items-center gap-0.5", row.level ? "pl-[17px]" : "pl-[5px]")}
          >
            <svg viewBox="0 0 8 8" className="h-2 w-2" aria-hidden="true">
              {row.arrow === "open" && <path d="M6 2v4H2z" fill="#eee" />}
              {row.arrow === "closed" && <path d="M2 1v5l3-2.500z" fill="#eee" />}
            </svg>
            {row.icons.map((n) => <Icon key={n} name={n} />)}
            <span>{row.text}</span>
          </li>
        ))}
      </ul>
      <div role="tablist" className="flex h-[15px] pl-[2px]">
        <button role="tab" aria-selected="true" className="w-[43px] bg-[#6e6e6e] text-white">3d History</button>
        <button role="tab" aria-selected="false" className="w-11 border border-l-0 border-[#5e5e5e] text-[#b5b5b5]">Properties</button>
      </div>
    </aside>
  );
}

const earTop = "M334 278 297 284C286 286 281 290 281.500 296C282 302 288 306 297 307.500L337 313.500L345 300z";
const earSide = "M281.500 295V314C282 320 287 325 297 326.700L337 333.300V305L297 300z";
const flatEar = "M898.500 337.500 860 343C848 345 842 350 842.500 355.500C842.500 361 848 366 860 368L898.500 373.500";
const flatTopEar = "M1019.500 266.500 1030 244C1033 239 1040 235.500 1051 235.500S1069 239 1072 244L1082.500 266.500";

function Solid() {
  const ear = (
    <>
      <path d={earSide} fill="#808080" stroke="#2c2c2c" />
      <path d={earTop} fill="#909090" stroke="#2c2c2c" />
      <path d="M297 307.500V326.500" stroke="#2c2c2c" />
      <ellipse cx="303" cy="295" rx="14" ry="8.300" fill="url(#hole)" stroke="#222" />
    </>
  );
  return (
    <>
      <defs>
        <linearGradient id="side">
          <stop offset="0" stopColor="#808080" />
          <stop offset=".35" stopColor="#7c7c7c" />
          <stop offset=".6" stopColor="#6f6f6f" />
          <stop offset=".85" stopColor="#515151" />
          <stop offset="1" stopColor="#5c5c5c" />
        </linearGradient>
        <linearGradient id="hole">
          <stop offset="0" stopColor="#555" />
          <stop offset=".6" stopColor="#777" />
          <stop offset="1" stopColor="#888" />
        </linearGradient>
        <clipPath id="bore">
          <ellipse cx="489.500" cy="252" rx="39" ry="22.500" />
        </clipPath>
      </defs>
      {ear}
      <g transform="matrix(-1 0 0 1 979 0)">{ear}</g>
      <path d="M334 252V296L337 313V333C352 374 415 404.500 489.500 404.500S627 374 642 333V313L645 296V252z" fill="url(#side)" stroke="#333" />
      <ellipse cx="489.500" cy="252" rx="155.500" ry="89.500" fill="#909090" stroke="#222" />
      <ellipse cx="489.500" cy="252" rx="39" ry="22.500" fill="url(#hole)" stroke="#222" />
      <ellipse cx="489.500" cy="264.500" rx="39" ry="22.500" fill="#000" clipPath="url(#bore)" />
      <path d="M517.500 236V248" stroke="#222" />
      <path d="M457.500 383V404L469 427C472 432 480 435.500 489.500 435.500S507 432 510 427L521.500 404V383z" fill="#6e6e6e" stroke="#222" />
      <path d="M469 405V427C472 432 480 435.500 489.500 435.500S507 432 510 427V405z" fill="url(#side)" />
      <path d="M457.500 383Q489.500 386.500 521.500 383L511 406C507 412 500 415.500 489.500 415.500S472 412 468 406z" fill="#909090" stroke="#222" />
      <path d="M469 407V427M510 407V427" stroke="#333" />
      <ellipse cx="489.500" cy="403" rx="14" ry="8.300" fill="url(#hole)" stroke="#222" />
    </>
  );
}

function Gizmo() {
  return (
    <g className="[font-family:'Liberation_Sans',sans-serif] text-[12px]" fill="none">
      <path d="M489.500 313V272" stroke="#1a1aff" strokeWidth="1.500" />
      <path d="M489.500 261 486 276 489.500 274 493 276z" fill="#0000c8" stroke="#0000ff" />
      <path d="M489.500 315 524 295" stroke="#f01010" strokeWidth="1.300" />
      <path d="M537 288 521 293 524 295 525 299z" fill="#a02020" stroke="#f01010" />
      <path d="M489.500 315 455 295" stroke="#1ee61e" strokeWidth="1.300" />
      <path d="M442 288 458 292 455 295 454 299z" fill="#1ee61e" stroke="#1ee61e" />
      <path d="M480 315.500 489.500 310 499 315.500 489.500 321zM484.500 313 494.500 318.500M494.500 313 484.500 318.500" stroke="#fff" />
      <g fill="#fff" textAnchor="middle">
        <text x="489.500" y="254">Z</text>
        <text x="433" y="287">Y</text>
        <text x="546" y="287">X</text>
      </g>
    </g>
  );
}

function Drawing() {
  return (
    <svg className="absolute inset-0 h-full w-full" fill="none" role="img" aria-label="Flange model and sketch">
      <g transform="translate(-210 -111)">
        <g stroke="#3e3e3e">
          <path d="M391 386 541 472M697 309 763 347M541 471.500 621 425M682 390.500 761 345M772 481.500 927 412" />
        </g>
        <path d="M541 471.500 555 461 559 465zM761 345 743 352 746 356zM927 412 908 416 910 421z" fill="#f0f0f0" />
        <Solid />
        <Gizmo />
        <g stroke="#393939" strokeWidth="1.500">
          <ellipse cx="1051" cy="355.500" rx="155.500" ry="89.500" />
          <ellipse cx="1051" cy="355.500" rx="140" ry="81" strokeWidth="1" stroke="#444" strokeDasharray="17 5" />
          <ellipse cx="1051" cy="355.500" rx="39.500" ry="22.500" />
          <circle cx="1051" cy="355.500" r=".5" />
          <path d={flatEar} />
          <path d={flatEar} transform="matrix(-1 0 0 1 2102 0)" />
          <path d={flatTopEar} />
          <path d={flatTopEar} transform="matrix(1 0 0 -1 0 711)" />
          <ellipse cx="864" cy="355.500" rx="14.300" ry="8.300" />
          <ellipse cx="1238" cy="355.500" rx="14.300" ry="8.300" />
          <ellipse cx="1051" cy="248" rx="14.300" ry="8.300" />
          <ellipse cx="1051" cy="463" rx="14.300" ry="8.300" />
        </g>
        <g className="[font-family:'Liberation_Sans',sans-serif] text-[26px]" fill="#fff" stroke="#fff" strokeWidth=".5" textAnchor="middle">
          <text transform="translate(655 415) rotate(-30)">100.0</text>
          <text transform="translate(737 511) rotate(-30)">Ø100.0</text>
        </g>
        <g stroke="#b8c08a">
          <path d="M280.500 394V578M210 483.500 375 578M210 564.500 393 459.500M270.500 514.500h20v20h-20z" />
        </g>
      </g>
    </svg>
  );
}

function Viewport() {
  const pill = "h-[11px] rounded-[2px] bg-[#1f1f1f] text-[#8e8e8e] leading-[11px]";
  return (
    <main className="ml-[3px] mr-px flex min-w-0 flex-1 flex-col">
      <div className="flex h-[13px] items-center">
        <div className="flex h-full w-[83px] items-center justify-between bg-[#6b6b6b] pl-[13px] pr-px text-white">
          Drawing.dwg*
          <button aria-label="Close drawing"><Icon name="x" /></button>
        </div>
        <button aria-label="Drawing list" className="ml-auto mr-1"><Caret /></button>
      </div>
      <div className="relative flex-1 overflow-hidden border border-[#6a6a6a] bg-black">
        <Drawing />
        <div className="absolute left-[5px] top-1 flex gap-[2px]">
          <button className={clsx(pill, "w-[18px]")}>+</button>
          <button className={clsx(pill, "w-[47px]")}>Top SW Iso</button>
          <button className={clsx(pill, "w-10")}>Realistic</button>
          <button className={clsx(pill, "w-[93px]")}>--- no associated view ---</button>
        </div>
        <div className="absolute left-[505px] top-1 flex gap-[2px]">
          {[false, true].map((on) => (
            <button key={String(on)} aria-label={on ? "Crossing selection" : "Window selection"} className="h-[26px] w-[26px] border border-[#3e5672] bg-[#27374a]">
              <svg viewBox="0 0 24 24" fill="none" className="h-6 w-6">
                <path d="M5 5h14v8H5z" stroke={on ? "#3c6696" : "#56687c"} fill={on ? "#3c6696" : "none"} strokeDasharray="2 1" />
                <path d="M14 11v8l2-1.800 1.400 2.600 1.300-.7-1.300-2.500H20z" fill="#9aa2ac" />
              </svg>
            </button>
          ))}
        </div>
        <div className="absolute right-[9px] top-[9px] flex w-[98px] flex-col items-center">
          <svg viewBox="0 0 98 98" fill="none" stroke="#484848" className="w-full">
            <circle cx="49" cy="49" r="48" />
            <circle cx="49" cy="49" r="32" />
            <path d="M1 49.500h96M49.500 1v96" />
            <circle cx="35" cy="62" r="3.500" fill="#7a5a3e" stroke="none" />
          </svg>
          <button className={clsx(pill, "-mt-px w-12")}>Top SW Iso</button>
        </div>
      </div>
      <div role="tablist" className="flex h-[14px] border-b border-[#7b7b7b] text-[#b5b5b5]">
        <button aria-label="Sheet list" className="mr-[11px] pl-[2px]"><Icon name="sheets" /></button>
        <button role="tab" aria-selected="true" className="w-8 bg-[#6b6b6b] font-bold text-white">Model</button>
        {["A4", "A3", "A2", "A1"].map((s) => (
          <button key={s} role="tab" aria-selected="false" className="w-[18px] border-r border-[#636363]">{s}</button>
        ))}
      </div>
    </main>
  );
}

function CommandLine() {
  return (
    <section className="flex h-[73px] border-t border-[#666] bg-[#5a5a5a]">
      <div className="flex w-3 shrink-0 flex-col items-center overflow-hidden bg-[#8a8a8a] text-white">
        <button aria-label="Close command line"><Icon name="x" /></button>
        <button aria-label="Pin command line"><Icon name="pin" /></button>
        <span className="h-12 rotate-180 whitespace-nowrap [writing-mode:vertical-rl] leading-[12px]">Command Line</span>
      </div>
      <div className="flex min-w-0 flex-1 flex-col [font-family:'DejaVu_Sans_Mono',monospace] text-[14px] text-[#f0f0f0]">
        <div className="flex h-[51px] flex-col justify-end overflow-hidden whitespace-nowrap pb-px pl-[2px] leading-[18px]">
          <p>Z,ZOOM - Zoom</p>
          <p>Specify corner of window, or [All/Center/Dynamic/Extents/Previous/Scale/RScale/Window/Object] &lt;real time&gt;:</p>
          <p>*cancel*</p>
        </div>
        <label className="flex h-[19px] items-center border-t border-[#6e6e6e] pl-px">
          Command:
          <input type="text" className="ml-2 min-w-0 flex-1 bg-transparent outline-none" />
        </label>
      </div>
    </section>
  );
}

function StatusButton({ icon, on, className = "w-[19px]" }: { icon: string; on?: boolean; className?: string }) {
  return (
    <button
      aria-label={icon}
      aria-pressed={!!on}
      className={clsx("flex h-[14px] items-center justify-center border", on ? "border-[#5c8cc4] bg-[#486a92]" : "border-transparent border-r-[#575757]", className)}
    >
      <Icon name={icon} />
    </button>
  );
}

function StatusBar() {
  const active = ["snap", "snap3d", "otrack", "lweight", "hatchS"];
  const left = ["gridDots", "grid", "snap", "snap3d", "otrack", "polar", "ortho", "dyn", "cross", "lweight", "hatchS"];
  return (
    <footer className="flex h-[15px] items-center bg-[#4b4b4b] [font-family:'Open_Sans',sans-serif] text-[7px] text-[#f0f0f0]">
      <output className="w-[91px] pl-[2px]">-129.6630,-34.7622,0.000</output>
      {left.map((n) => (
        <StatusButton key={n} icon={n} on={active.includes(n)} className={n === "lweight" ? "ml-1 w-[19px]" : "w-[19px]"} />
      ))}
      <span className="ml-auto mr-[2px]">MODEL</span>
      <Icon name="modelLock" />
      <Icon name="modelX" />
      <div className="ml-[62px] flex">
        <StatusButton icon="selBulb" className="w-4" />
        <StatusButton icon="bulb" className="w-[15px]" />
        <StatusButton icon="selA" on className="w-5" />
        <StatusButton icon="selB" on className="w-5" />
        <StatusButton icon="calc" />
        <StatusButton icon="ucs" on className="w-5" />
      </div>
      <button className="w-[60px] text-center">m1:1</button>
      <StatusButton icon="hand" />
      <StatusButton icon="zoom" />
      <StatusButton icon="zoomAll" />
      <StatusButton icon="zoomWin" />
      <StatusButton icon="orbit" />
      <StatusButton icon="sync" />
      <StatusButton icon="lockUi" className="w-[15px]" />
      <StatusButton icon="full" className="w-[19px]" />
    </footer>
  );
}

export default function App() {
  return (
    <div className="flex h-screen flex-col overflow-hidden bg-[#4b4b4b] [font-family:Lato,'Open_Sans',sans-serif] text-[8px] leading-[10px]">
      <TitleBar />
      <Ribbon />
      <div className="flex min-h-0 flex-1 pb-[5px]">
        <HistoryPanel />
        <Viewport />
      </div>
      <CommandLine />
      <StatusBar />
    </div>
  );
}
